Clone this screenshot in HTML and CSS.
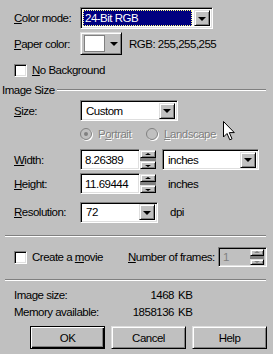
FILE: index.html
```html
<!DOCTYPE html>
<html lang="en">
<head>
    <meta charset="UTF-8">
    <title>New Image</title>
    <link rel="stylesheet" href="styles.css">
</head>
<body>
    <div class="dialog">
        <div class="row row-mode">
            <span class="label"><u>C</u>olor mode:</span>
            <div class="combo combo-mode">
                <span class="combo-text selected"><span class="focus">24-Bit RGB</span></span>
                <span class="combo-btn"><i class="tri-down"></i></span>
            </div>
        </div>

        <div class="row row-paper">
            <span class="label"><u>P</u>aper color:</span>
            <div class="color-btn">
                <span class="swatch"></span>
                <i class="tri-down"></i>
            </div>
            <span class="rgb">RGB: 255,255,255</span>
        </div>

        <div class="row row-bg">
            <span class="checkbox"></span>
            <span><u>N</u>o Background</span>
        </div>

        <div class="group-title">
            <span>Image Size</span>
            <span class="etched"></span>
        </div>

        <div class="row row-size">
            <span class="label"><u>S</u>ize:</span>
            <div class="combo combo-size">
                <span class="combo-text">Custom</span>
                <span class="combo-btn"><i class="tri-down"></i></span>
            </div>
        </div>

        <div class="row row-orient">
            <span class="label"></span>
            <span class="radio checked"></span>
            <span class="disabled">P<u>o</u>rtrait</span>
            <span class="radio radio-land"></span>
            <span class="disabled"><u>L</u>andscape</span>
        </div>

        <div class="row row-width">
            <span class="label"><u>W</u>idth:</span>
            <div class="field">8.26389</div>
            <div class="spin">
                <span class="spin-btn"><i class="tri-up"></i></span>
                <span class="spin-gap"></span>
                <span class="spin-btn"><i class="tri-down small"></i></span>
            </div>
            <div class="combo combo-unit">
                <span class="combo-text">inches</span>
                <span class="combo-btn"><i class="tri-down"></i></span>
            </div>
        </div>

        <div class="row row-height">
            <span class="label"><u>H</u>eight:</span>
            <div class="field">11.69444</div>
            <div class="spin">
                <span class="spin-btn"><i class="tri-up"></i></span>
                <span class="spin-gap"></span>
                <span class="spin-btn"><i class="tri-down small"></i></span>
            </div>
            <span class="unit">inches</span>
        </div>

        <div class="row row-res">
            <span class="label"><u>R</u>esolution:</span>
            <div class="combo combo-res">
                <span class="combo-text">72</span>
                <span class="combo-btn"><i class="tri-down"></i></span>
            </div>
            <span class="unit">dpi</span>
        </div>

        <div class="separator sep-1"></div>

        <div class="row row-movie">
            <span class="checkbox"></span>
            <span class="movie-label">Create a <u>m</u>ovie</span>
            <span class="frames-label"><u>N</u>umber of frames:</span>
            <div class="field frames">
                <span class="frames-val">1</span>
                <div class="spin spin-inner">
                    <span class="spin-btn"><i class="tri-up off"></i></span>
                    <span class="spin-gap"></span>
                    <span class="spin-btn"><i class="tri-down small off"></i></span>
                </div>
            </div>
        </div>

        <div class="separator sep-2"></div>

        <div class="info">
            <div class="info-row">
                <span class="info-label">Image size:</span>
                <span class="info-num">1468</span>
                <span class="info-unit">KB</span>
            </div>
            <div class="info-row">
                <span class="info-label">Memory available:</span>
                <span class="info-num">1858136</span>
                <span class="info-unit">KB</span>
            </div>
        </div>

        <div class="buttons">
            <button class="btn default">OK</button>
            <button class="btn">Cancel</button>
            <button class="btn">Help</button>
        </div>
    </div>

    <svg class="cursor" width="13" height="20" viewBox="0 0 13 20">
        <path d="M0.5 0.5 L0.5 16 L4 12.5 L6.8 18.8 L9 17.8 L6.3 11.6 L11.3 11.6 Z" fill="#fff" stroke="#000" stroke-width="1"/>
    </svg>
</body>
</html>
```

FILE: styles.css
```css
body {
    margin: 0;
    width: 273px;
    height: 354px;
    overflow: hidden;
    position: relative;
    background: #c0c0c0;
    font-family: "Liberation Sans", Arial, sans-serif;
    font-size: 11.5px;
    letter-spacing: -0.5px;
    color: #000;
    white-space: nowrap;
}

u {
    text-decoration: underline;
    text-underline-offset: 1px;
}

.dialog {
    padding-top: 7px;
}

.row {
    display: flex;
    align-items: center;
    padding-left: 14px;
}

.label {
    width: 66px;
    flex-shrink: 0;
}

/* sunken 3d edge */
.combo, .field, .checkbox {
    box-sizing: border-box;
    border: 1px solid;
    border-color: #808080 #fff #fff #808080;
    box-shadow: inset 1px 1px #000, inset -1px -1px #dfdfdf;
    background: #fff;
}

.combo {
    display: flex;
    align-items: center;
    padding: 2px;
}

.combo-text {
    flex: 1;
    padding-left: 3px;
    align-self: stretch;
    display: flex;
    align-items: center;
}

.combo-btn, .spin-btn, .color-btn, .btn {
    box-sizing: border-box;
    border: 1px solid;
    border-color: #dfdfdf #000 #000 #dfdfdf;
    box-shadow: inset 1px 1px #fff, inset -1px -1px #808080;
    background: #c0c0c0;
}

.combo-btn {
    width: 16px;
    height: 16px;
    display: flex;
    align-items: center;
    justify-content: center;
}

.tri-down {
    width: 0;
    height: 0;
    border-left: 4px solid transparent;
    border-right: 4px solid transparent;
    border-top: 4px solid #000;
    margin-top: 1px;
}

.tri-down.small, .tri-up {
    border-left-width: 3px;
    border-right-width: 3px;
}

.tri-down.small {
    border-top-width: 2px;
}

.tri-up {
    width: 0;
    height: 0;
    border-left: 3px solid transparent;
    border-right: 3px solid transparent;
    border-bottom: 2px solid #000;
}

.tri-up.off {
    border-bottom-color: #808080;
}

.tri-down.off {
    border-top-color: #808080;
}

.row-mode {
    height: 22px;
}

.combo-mode {
    width: 133px;
    height: 22px;
}

.selected {
    background: #000080;
    color: #fff;
    margin-right: 2px;
    padding-left: 0;
}

.focus {
    box-sizing: border-box;
    width: 100%;
    height: 100%;
    display: flex;
    align-items: center;
    padding-left: 2px;
    outline: 1px dotted #ffff80;
    outline-offset: -1px;
}

.row-paper {
    height: 23px;
    margin-top: 3px;
}

.color-btn {
    width: 42px;
    height: 23px;
    display: flex;
    align-items: center;
    padding-left: 3px;
    gap: 5px;
}

.swatch {
    width: 19px;
    height: 15px;
    background: #fff;
    border: 1px solid #808080;
}

.rgb {
    margin-left: 7px;
}

.row-bg {
    height: 20px;
    margin-top: 5px;
}

.checkbox {
    width: 13px;
    height: 13px;
    margin-right: 5px;
    flex-shrink: 0;
}

.group-title {
    display: flex;
    align-items: center;
    height: 13px;
    margin-top: 3px;
    padding-left: 2px;
}

.etched {
    flex: 1;
    margin: 0 7px 0 2px;
    border-top: 1px solid #808080;
    border-bottom: 1px solid #fff;
}

.row-size {
    height: 21px;
    margin-top: 4px;
}

.combo-size {
    width: 98px;
    height: 21px;
}

.row-orient {
    height: 22px;
    margin-top: 2px;
}

.radio {
    box-sizing: border-box;
    width: 12px;
    height: 12px;
    border-radius: 50%;
    border: 1px solid #808080;
    box-shadow: 1px 1px #fff;
    background: #c0c0c0;
    margin-right: 6px;
    position: relative;
    flex-shrink: 0;
}

.radio.checked::after {
    content: "";
    position: absolute;
    left: 3px;
    top: 3px;
    width: 4px;
    height: 4px;
    border-radius: 50%;
    background: #808080;
}

.radio-land {
    margin-left: 15px;
}

.disabled {
    color: #808080;
    text-shadow: 1px 1px #fff;
}

.row-width, .row-height {
    height: 21px;
    margin-top: 4px;
}

.row-height {
    margin-top: 3px;
}

.field {
    width: 60px;
    height: 21px;
    padding-left: 4px;
    display: flex;
    align-items: center;
}

.spin {
    display: flex;
    flex-direction: column;
    width: 16px;
    height: 19px;
}

.spin-btn {
    flex: 1;
    display: flex;
    align-items: center;
    justify-content: center;
}

.spin-gap {
    height: 3px;
    background: #808080;
}

.combo-unit {
    width: 97px;
    height: 21px;
    margin-left: 6px;
}

.unit {
    margin-left: 12px;
}

.row-res {
    height: 20px;
    margin-top: 8px;
}

.combo-res {
    width: 78px;
    height: 21px;
}

.separator {
    margin: 0 7px 0 5px;
    border-top: 1px solid #808080;
    border-bottom: 1px solid #fff;
}

.sep-1 {
    margin-top: 13px;
}

.row-movie {
    height: 20px;
    margin-top: 10px;
}

.movie-label {
    width: 96px;
    flex-shrink: 0;
}

.frames-label {
    width: 86px;
    flex-shrink: 0;
}

.frames {
    margin-left: 4px;
    width: 49px;
    height: 20px;
    flex-shrink: 0;
    background: #c0c0c0;
    color: #808080;
    padding-right: 2px;
    justify-content: space-between;
}

.spin-inner {
    height: 16px;
    width: 14px;
}

.sep-2 {
    margin-top: 12px;
}

.info {
    padding: 5px 0 0 14px;
}

.info-row {
    display: flex;
    height: 17px;
    align-items: center;
}

.info-label {
    width: 109px;
}

.info-num {
    width: 51px;
    text-align: right;
}

.info-unit {
    margin-left: 4px;
}

.buttons {
    display: flex;
    gap: 6px;
    padding-left: 30px;
    margin-top: 6px;
}

.btn {
    width: 75px;
    height: 23px;
    font: inherit;
    letter-spacing: inherit;
    color: #000;
    padding: 0;
}

.btn.default {
    border-color: #000;
    box-shadow: inset 1px 1px #fff, inset -1px -1px #000, inset -2px -2px #808080;
}

.cursor {
    position: absolute;
    left: 223px;
    top: 121px;
}
```
